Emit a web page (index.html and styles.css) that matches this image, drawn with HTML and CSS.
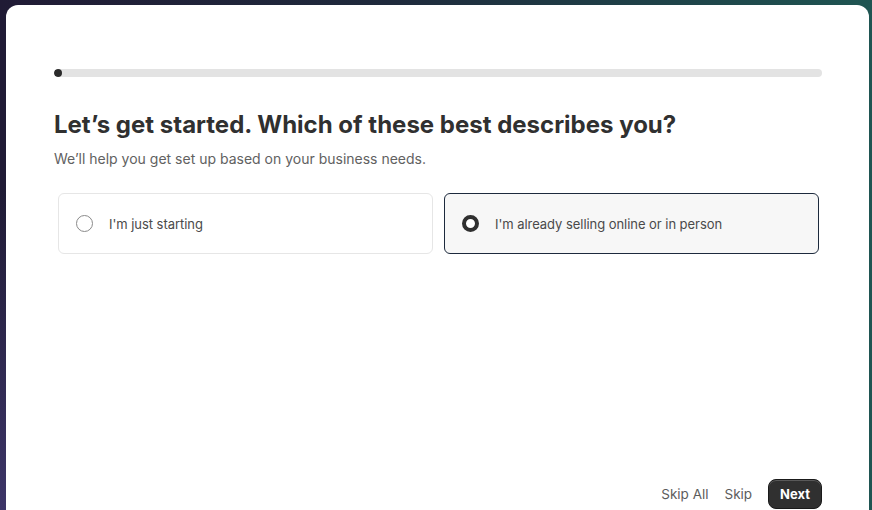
FILE: index.html
```html
<!DOCTYPE html>
<html lang="en">
<head>
<meta charset="utf-8">
<title>Onboarding</title>
<link rel="stylesheet" href="styles.css">
</head>
<body>
  <main class="card">
    <div class="progress"><div class="progress-fill"></div></div>
    <h1 class="title">Let’s get started. Which of these best describes you?</h1>
    <p class="subtitle">We’ll help you get set up based on your business needs.</p>
    <div class="options">
      <label class="option">
        <span class="radio"></span>
        <span class="option-label">I'm just starting</span>
      </label>
      <label class="option option-selected">
        <span class="radio radio-checked"></span>
        <span class="option-label">I'm already selling online or in person</span>
      </label>
    </div>
    <div class="footer">
      <button class="link-btn">Skip All</button>
      <button class="link-btn">Skip</button>
      <button class="primary-btn">Next</button>
    </div>
  </main>
</body>
</html>
```
FILE: styles.css
```css
* { box-sizing: border-box; }
html, body { margin: 0; height: 510px; overflow: hidden; }
body {
  font-family: Inter, "Noto Sans", sans-serif;
  background:
    radial-gradient(ellipse 120% 90% at 0% 100%, #3d3568 0%, rgba(61,53,104,0) 70%),
    linear-gradient(90deg, #201b35 0%, #1f2a3c 45%, #1f5552 100%);
  display: flex;
  flex-direction: column;
}
.card {
  margin: 5px 3px 0 6px;
  height: 505px;
  background: #fff;
  border-radius: 12px 12px 0 0;
  padding: 64px 47px 1px 48px;
  display: flex;
  flex-direction: column;
}
.progress {
  height: 8px;
  background: #e3e3e3;
  border-radius: 4px;
  overflow: hidden;
}
.progress-fill {
  width: 8px;
  height: 100%;
  background: #2b2b2b;
  border-radius: 4px;
}
.title {
  margin: 33px 0 0;
  font-size: 24px;
  line-height: 30px;
  font-weight: 700;
  color: #303030;
}
.subtitle {
  margin: 9px 0 0;
  font-size: 14px;
  line-height: 20px;
  color: #616161;
}
.options {
  margin: 24px 3px 0 4px;
  display: grid;
  grid-template-columns: 1fr 1fr;
  gap: 11px;
}
.option {
  height: 61px;
  display: flex;
  align-items: center;
  gap: 16px;
  padding: 0 17px;
  border: 1px solid #e6e6e6;
  border-radius: 6px;
  background: #fff;
  cursor: pointer;
}
.option-selected {
  background: #f7f7f7;
  border-color: #1d2a3d;
}
.radio {
  width: 17px;
  height: 17px;
  border-radius: 50%;
  border: 1px solid #8a8a8a;
  background: #fff;
  flex: none;
}
.radio-checked {
  border: 4.5px solid #303030;
}
.option-label {
  font-size: 13px;
  color: #4a4a4a;
  letter-spacing: -0.05px;
}
.footer {
  margin-top: auto;
  display: flex;
  justify-content: flex-end;
  align-items: center;
  gap: 16px;
}
.link-btn {
  background: none;
  border: none;
  font-family: inherit;
  font-size: 13.5px;
  color: #5c5c5c;
  padding: 6px 0;
  cursor: pointer;
}
.primary-btn {
  height: 30px;
  padding: 0 11px;
  border: 1px solid #1a1a1a;
  border-radius: 8px;
  background: #303030;
  color: #fff;
  font-family: inherit;
  font-size: 13px;
  font-weight: 700;
  box-shadow: inset 0 1px 0 rgba(255,255,255,0.2);
  cursor: pointer;
}
```
